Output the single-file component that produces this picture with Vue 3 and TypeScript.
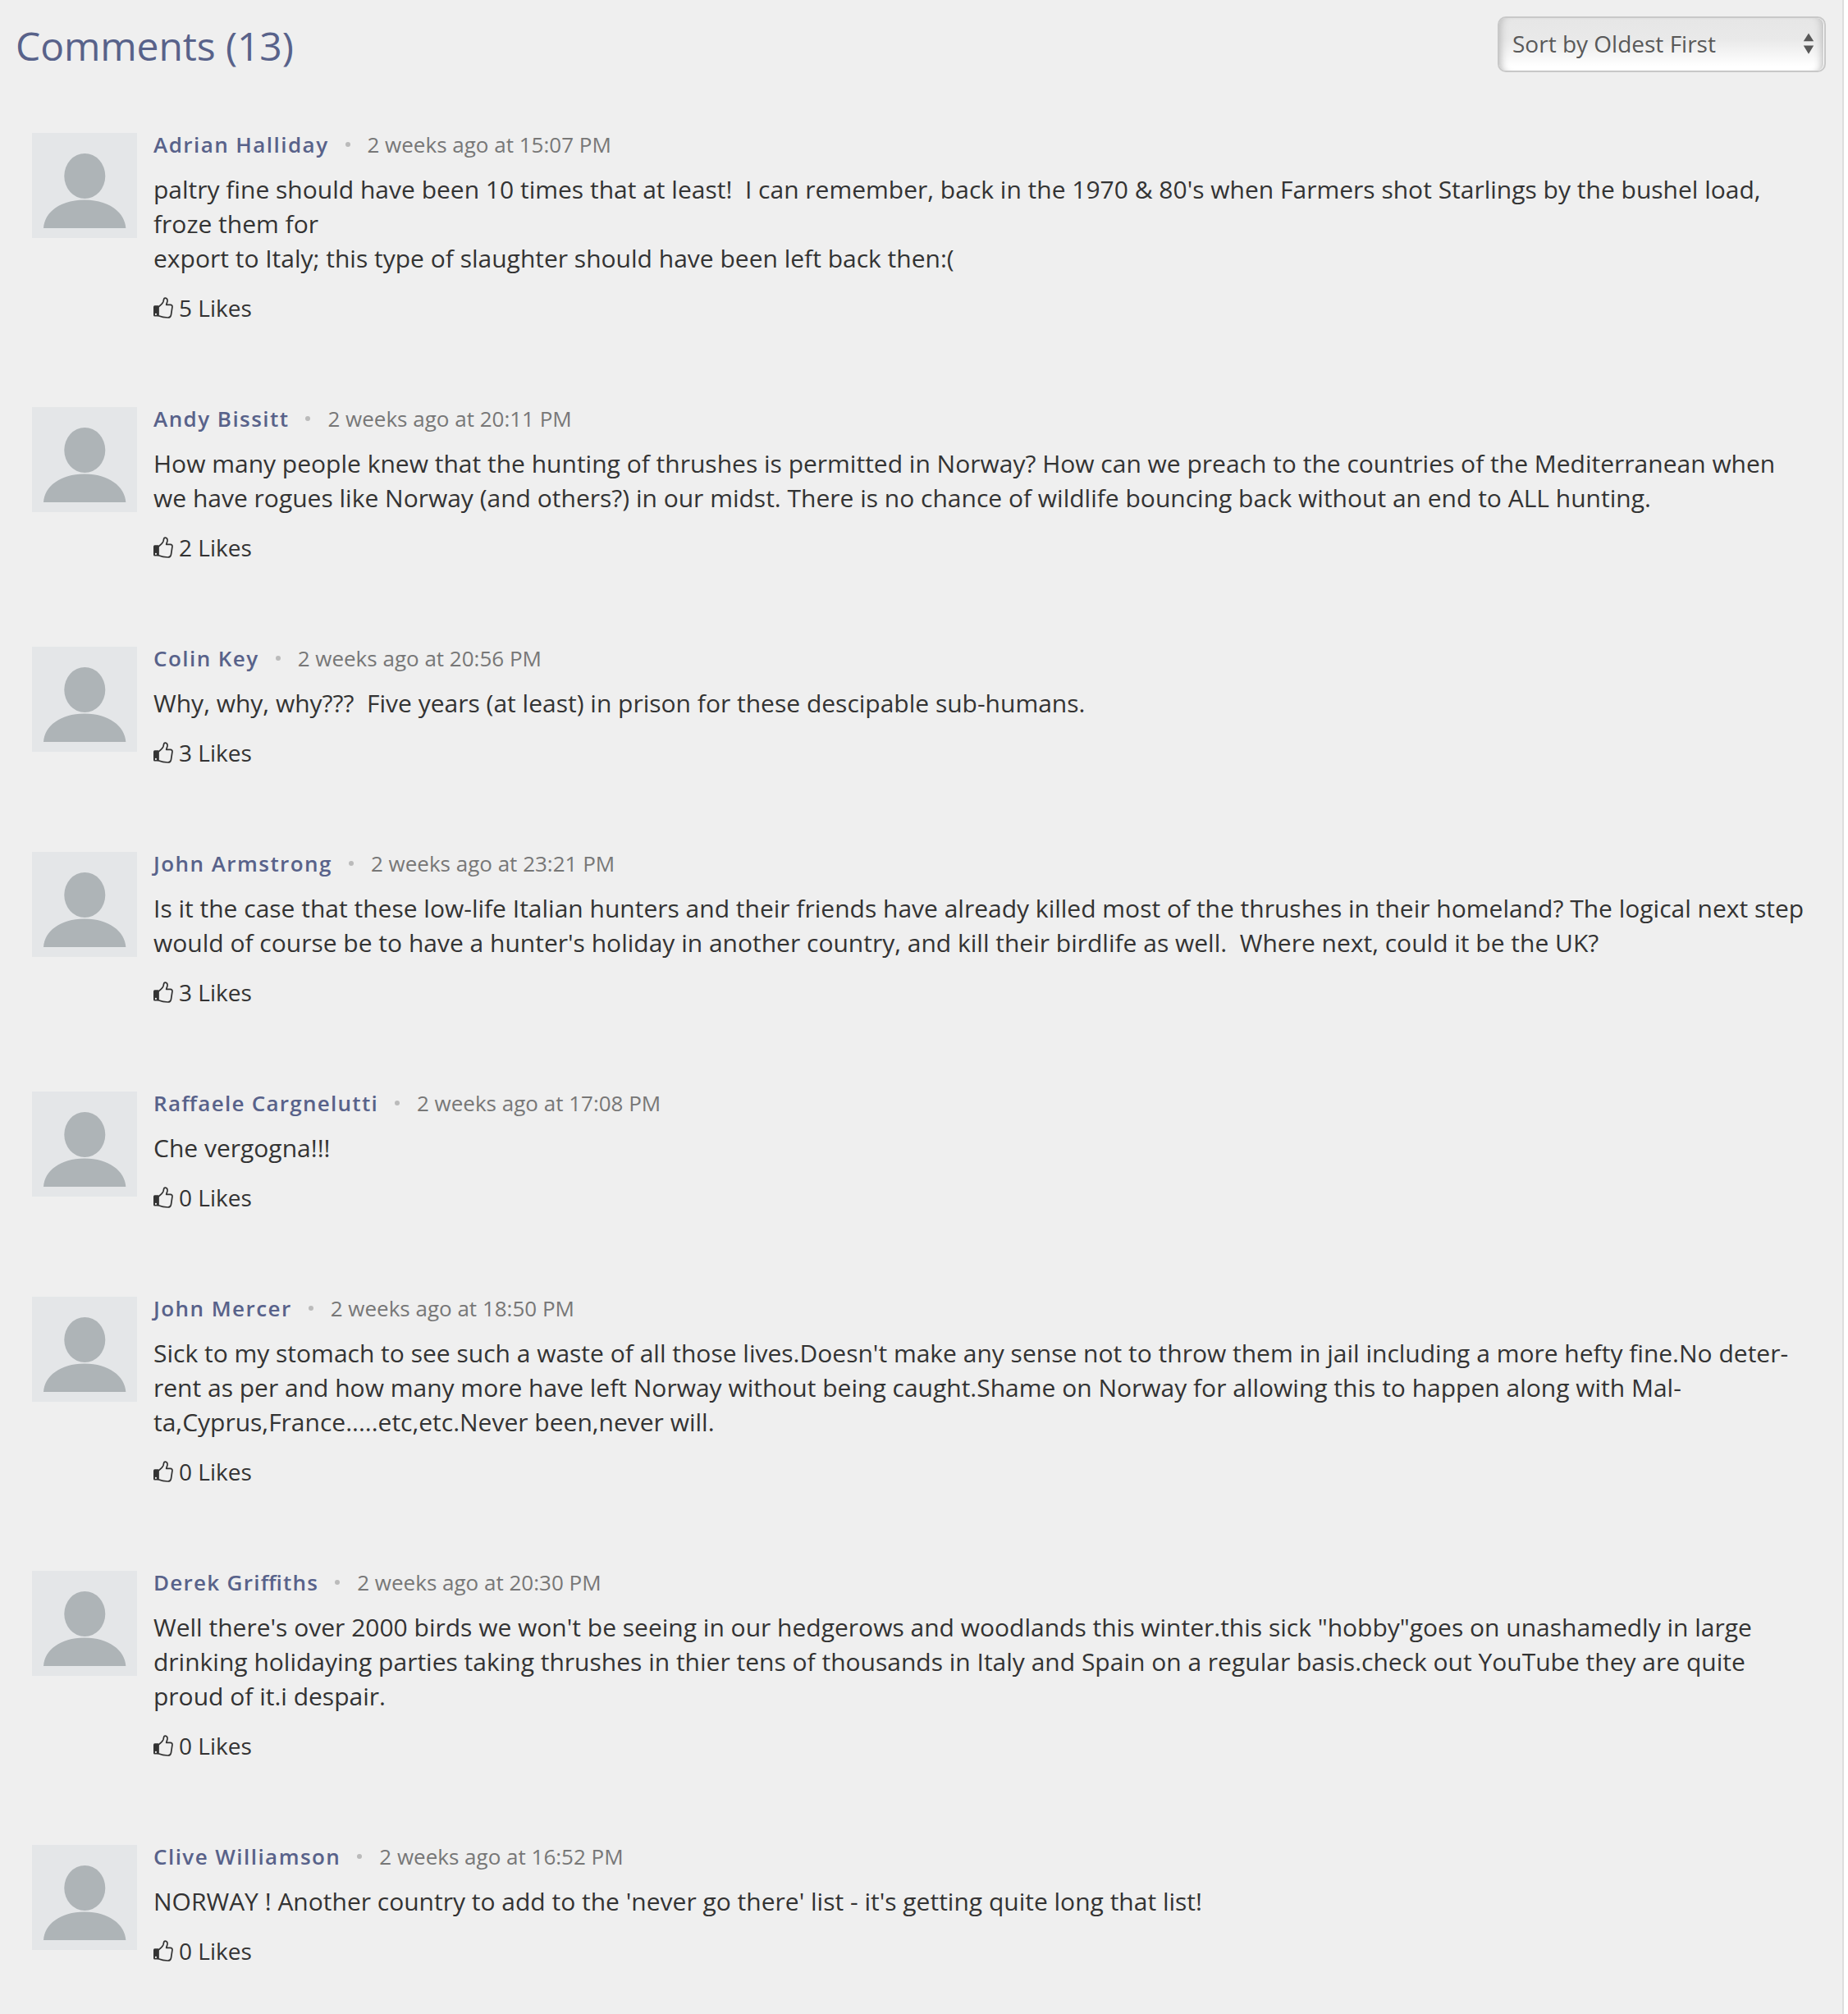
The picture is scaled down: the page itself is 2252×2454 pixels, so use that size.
<script setup lang="ts">
interface Comment {
  author: string
  time: string
  lines: string[]
  likes: number
}

const comments: Comment[] = [
  {
    author: 'Adrian Halliday',
    time: '15:07 PM',
    lines: [
      "paltry fine should have been 10 times that at least!  I can remember, back in the 1970 & 80's when Farmers shot Starlings by the bushel load,",
      'froze them for',
      'export to Italy; this type of slaughter should have been left back then:(',
    ],
    likes: 5,
  },
  {
    author: 'Andy Bissitt',
    time: '20:11 PM',
    lines: [
      'How many people knew that the hunting of thrushes is permitted in Norway? How can we preach to the countries of the Mediterranean when',
      'we have rogues like Norway (and others?) in our midst. There is no chance of wildlife bouncing back without an end to ALL hunting.',
    ],
    likes: 2,
  },
  {
    author: 'Colin Key',
    time: '20:56 PM',
    lines: ['Why, why, why???  Five years (at least) in prison for these descipable sub-humans.'],
    likes: 3,
  },
  {
    author: 'John Armstrong',
    time: '23:21 PM',
    lines: [
      'Is it the case that these low-life Italian hunters and their friends have already killed most of the thrushes in their homeland? The logical next step',
      "would of course be to have a hunter's holiday in another country, and kill their birdlife as well.  Where next, could it be the UK?",
    ],
    likes: 3,
  },
  {
    author: 'Raffaele Cargnelutti',
    time: '17:08 PM',
    lines: ['Che vergogna!!!'],
    likes: 0,
  },
  {
    author: 'John Mercer',
    time: '18:50 PM',
    lines: [
      "Sick to my stomach to see such a waste of all those lives.Doesn't make any sense not to throw them in jail including a more hefty fine.No deter-",
      'rent as per and how many more have left Norway without being caught.Shame on Norway for allowing this to happen along with Mal-',
      'ta,Cyprus,France.....etc,etc.Never been,never will.',
    ],
    likes: 0,
  },
  {
    author: 'Derek Griffiths',
    time: '20:30 PM',
    lines: [
      'Well there\'s over 2000 birds we won\'t be seeing in our hedgerows and woodlands this winter.this sick "hobby"goes on unashamedly in large',
      'drinking holidaying parties taking thrushes in thier tens of thousands in Italy and Spain on a regular basis.check out YouTube they are quite',
      'proud of it.i despair.',
    ],
    likes: 0,
  },
  {
    author: 'Clive Williamson',
    time: '16:52 PM',
    lines: ["NORWAY ! Another country to add to the 'never go there' list - it's getting quite long that list!"],
    likes: 0,
  },
]
</script>

<template>
  <main class="page">
    <header class="head">
      <h2 class="title">Comments (13)</h2>
      <div class="sort">
        <span>Sort by Oldest First</span>
        <svg class="arrows" width="14" height="26" viewBox="0 0 14 26">
          <path d="M7 0.5 13.200 10.300H0.800ZM7 25.700 13.200 15.600H0.800Z" fill="#595959" />
        </svg>
      </div>
    </header>

    <section class="list">
      <article v-for="c in comments" :key="c.author" class="comment">
        <svg class="avatar" width="128" height="128" viewBox="0 0 128 128">
          <rect width="128" height="128" fill="#e4e6e8" />
          <ellipse cx="64.3" cy="52.5" rx="25" ry="27.5" fill="#aeb4b7" />
          <path d="M14 116C15 97 34 81.500 64 81.500S113 97 114.300 116Z" fill="#aeb4b7" />
        </svg>
        <div class="body">
          <div class="meta">
            <span class="author" :class="{ ligature: c.author.includes('ff') }">{{ c.author }}</span>
            <span class="dot"></span>
            <span class="time">2 weeks ago at {{ c.time }}</span>
          </div>
          <p class="text"><span v-for="(line, i) in c.lines" :key="i" class="line">{{ line }}</span></p>
          <div class="likes">
            <svg class="thumb" width="24" height="26" viewBox="0 0 24 26">
              <path
                d="M6 12C9 9.800 11.300 7.600 12 5.500C12.600 3.500 12.200 1.200 14.300 1.200C16.600 1.200 17.300 3.300 16.900 5.300C16.600 6.900 15.900 8 15.700 9.400H20.500C22.500 9.400 23.200 10.800 22.900 12.400L21.500 21.500C21.100 24 19.600 25 17.500 25C12.500 25 9.500 24.200 6 22.800Z"
                fill="none"
                stroke="#333"
                stroke-width="1.7"
                stroke-linejoin="round"
              />
              <path d="M1.500 10.300H6V23.600H1.500Q0 23.600 0 22V11.800Q0 10.300 1.500 10.300Z" fill="#333" />
              <circle cx="2.900" cy="20.900" r="1.100" fill="#efefef" />
            </svg>
            <span>{{ c.likes }} Likes</span>
          </div>
        </div>
      </article>
    </section>
  </main>
</template>

<style>
body {
  background: #fff;
}
</style>

<style scoped>
.page {
  box-sizing: border-box;
  width: 2247px;
  height: 2454px;
  overflow: hidden;
  border-right: 2px solid #ddd;
  background: #efefef;
  font-family: 'Open Sans', 'Noto Sans', sans-serif;
  color: #333;
}
.head {
  display: flex;
  justify-content: space-between;
  align-items: flex-start;
  box-sizing: border-box;
  height: 162px;
  padding: 20px 20px 0 19px;
}
.title {
  margin: 0;
  font-size: 48px;
  line-height: 72px;
  font-weight: 400;
  letter-spacing: -0.1px;
  color: #58628a;
}
.sort {
  box-sizing: border-box;
  display: flex;
  justify-content: space-between;
  align-items: center;
  width: 400px;
  height: 68px;
  padding: 0 12px 2px 16px;
  border: 2px solid #c8c8c8;
  border-radius: 10px;
  background: linear-gradient(#e6e6e6 0%, #e9e9e9 40%, #fff 92%);
  box-shadow: inset -1px 0 0 #fff, inset 10px 0 10px -8px #bbb, inset -11px 0 10px -8px #bbb;
  font-size: 28px;
  color: #595959;
}
.comment {
  display: flex;
  gap: 20px;
  padding: 0 0 102px 39px;
}
.avatar {
  flex: none;
  display: block;
}
.meta {
  display: flex;
  align-items: center;
  height: 28px;
  font-size: 26px;
  line-height: 28px;
  white-space: nowrap;
}
.author {
  font-weight: 600;
  letter-spacing: 1.45px;
  font-feature-settings: 'liga' 1;
  color: #58628a;
}
.author.ligature {
  letter-spacing: 1.27px;
}
.dot {
  width: 6px;
  height: 6px;
  margin: 0 21px 0 20px;
  border-radius: 50%;
  background: #bbb;
}
.time {
  color: #777;
}
.text {
  margin: 20px 0 0;
  font-size: 30px;
  line-height: 42px;
}
.line {
  display: block;
  white-space: pre;
}
.likes {
  display: flex;
  align-items: center;
  gap: 7px;
  height: 38px;
  margin-top: 20px;
  font-size: 28px;
  line-height: 38px;
}
</style>
